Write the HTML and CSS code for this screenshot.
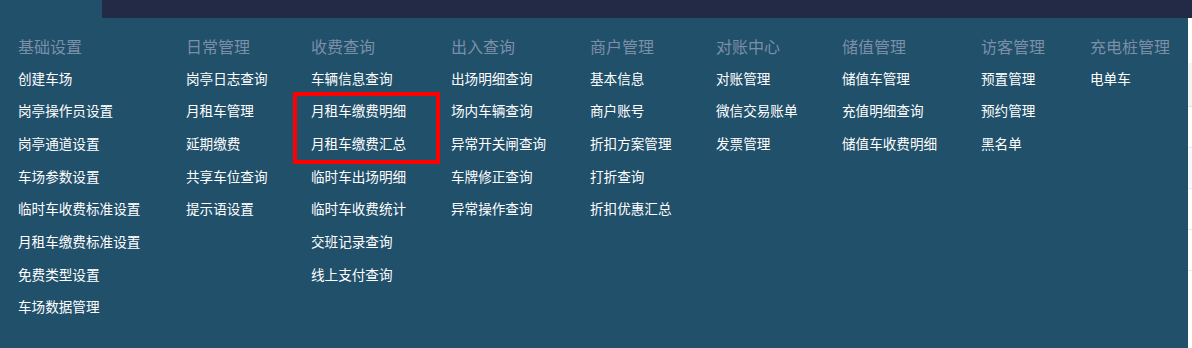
FILE: index.html
```html
<!DOCTYPE html>
<html lang="zh-CN">
<head>
  <meta charset="UTF-8">
  <meta name="viewport" content="width=device-width, initial-scale=1.0">
  <title>菜单</title>
  <link rel="stylesheet" href="styles.css">
</head>
<body>

  <div class="topbar">
    <div class="topbar-left"></div>
    <div class="topbar-main"></div>
  </div>

  <div class="page">
    <div class="mega-menu">
      <div class="menu-col">
        <div class="menu-title">基础设置</div>
        <a href="#">创建车场</a>
        <a href="#">岗亭操作员设置</a>
        <a href="#">岗亭通道设置</a>
        <a href="#">车场参数设置</a>
        <a href="#">临时车收费标准设置</a>
        <a href="#">月租车缴费标准设置</a>
        <a href="#">免费类型设置</a>
        <a href="#">车场数据管理</a>
      </div>
      <div class="menu-col">
        <div class="menu-title">日常管理</div>
        <a href="#">岗亭日志查询</a>
        <a href="#">月租车管理</a>
        <a href="#">延期缴费</a>
        <a href="#">共享车位查询</a>
        <a href="#">提示语设置</a>
      </div>
      <div class="menu-col">
        <div class="menu-title">收费查询</div>
        <a href="#">车辆信息查询</a>
        <div class="highlight">
          <a href="#">月租车缴费明细</a>
          <a href="#">月租车缴费汇总</a>
        </div>
        <a href="#">临时车出场明细</a>
        <a href="#">临时车收费统计</a>
        <a href="#">交班记录查询</a>
        <a href="#">线上支付查询</a>
      </div>
      <div class="menu-col">
        <div class="menu-title">出入查询</div>
        <a href="#">出场明细查询</a>
        <a href="#">场内车辆查询</a>
        <a href="#">异常开关闸查询</a>
        <a href="#">车牌修正查询</a>
        <a href="#">异常操作查询</a>
      </div>
      <div class="menu-col">
        <div class="menu-title">商户管理</div>
        <a href="#">基本信息</a>
        <a href="#">商户账号</a>
        <a href="#">折扣方案管理</a>
        <a href="#">打折查询</a>
        <a href="#">折扣优惠汇总</a>
      </div>
      <div class="menu-col">
        <div class="menu-title">对账中心</div>
        <a href="#">对账管理</a>
        <a href="#">微信交易账单</a>
        <a href="#">发票管理</a>
      </div>
      <div class="menu-col">
        <div class="menu-title">储值管理</div>
        <a href="#">储值车管理</a>
        <a href="#">充值明细查询</a>
        <a href="#">储值车收费明细</a>
      </div>
      <div class="menu-col">
        <div class="menu-title">访客管理</div>
        <a href="#">预置管理</a>
        <a href="#">预约管理</a>
        <a href="#">黑名单</a>
      </div>
      <div class="menu-col">
        <div class="menu-title">充电桩管理</div>
        <a href="#">电单车</a>
      </div>
    </div>

    <div class="table-edge">
      <div class="row-head"></div>
      <div class="row"></div>
      <div class="row row-alt"></div>
      <div class="row"></div>
      <div class="row"></div>
    </div>
  </div>

</body>
</html>
```

FILE: styles.css
```css
body {
  font-family: "Noto Sans CJK SC", "Noto Sans", sans-serif;
  margin: 0;
  background-color: #fff;
  overflow: hidden;
}

.topbar {
  display: flex;
  height: 18px;
}

.topbar-left {
  width: 102px;
  background-color: #21506b;
}

.topbar-main {
  flex: 1;
  background-color: #232a45;
}

.page {
  display: flex;
  height: 330px;
}

.mega-menu {
  width: 1188px;
  background-color: #21506b;
  padding: 14px 0 0 18px;
  box-sizing: border-box;
  display: grid;
  grid-template-columns: 168px 125px 140px 139px 126px 126px 139px 109px auto;
  align-items: start;
}

.menu-col {
  display: flex;
  flex-direction: column;
}

.menu-title {
  font-size: 16px;
  line-height: 29.5px;
  color: #7b8fa7;
  white-space: nowrap;
}

.menu-col a {
  font-size: 13.6px;
  line-height: 32.7px;
  color: #fff;
  text-decoration: none;
  white-space: nowrap;
}

.highlight {
  position: relative;
  display: flex;
  flex-direction: column;
}

.highlight::after {
  content: "";
  position: absolute;
  left: -18px;
  top: -2.5px;
  width: 147px;
  height: 72px;
  border: 4px solid #f00;
  box-sizing: border-box;
}

.table-edge {
  flex: 1;
  background-color: #fff;
  padding-top: 45px;
}

.row-head {
  height: 43px;
  background-color: #f4f4f4;
  border-bottom: 1px solid #e4e4e4;
}

.row {
  height: 40px;
  border-bottom: 1px solid #e8e8e8;
}

.row-alt {
  background-color: #f7f9fc;
}
```
